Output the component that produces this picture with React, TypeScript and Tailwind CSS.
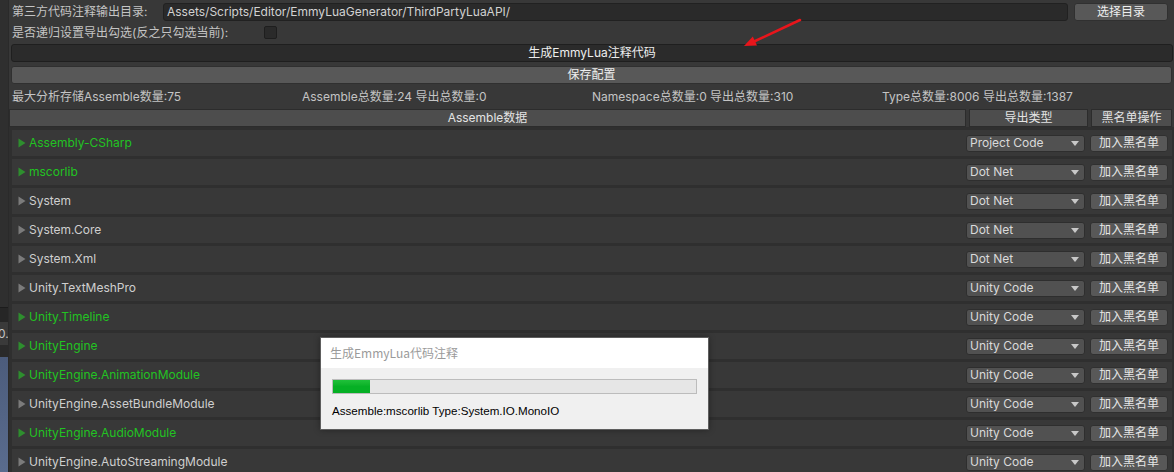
import React from "react";

type Row = { name: string; green: boolean; type: string };

const rows: Row[] = [
  { name: "Assembly-CSharp", green: true, type: "Project Code" },
  { name: "mscorlib", green: true, type: "Dot Net" },
  { name: "System", green: false, type: "Dot Net" },
  { name: "System.Core", green: false, type: "Dot Net" },
  { name: "System.Xml", green: false, type: "Dot Net" },
  { name: "Unity.TextMeshPro", green: false, type: "Unity Code" },
  { name: "Unity.Timeline", green: true, type: "Unity Code" },
  { name: "UnityEngine", green: true, type: "Unity Code" },
  { name: "UnityEngine.AnimationModule", green: true, type: "Unity Code" },
  { name: "UnityEngine.AssetBundleModule", green: false, type: "Unity Code" },
  { name: "UnityEngine.AudioModule", green: true, type: "Unity Code" },
  { name: "UnityEngine.AutoStreamingModule", green: false, type: "Unity Code" },
];

function Tri({ green }: { green: boolean }) {
  return (
    <svg width="8" height="10" viewBox="0 0 8 10" className="shrink-0">
      <polygon points="0.5,0.5 7.5,5 0.5,9.5" fill={green ? "#2e8e2e" : "#7b7b7b"} />
    </svg>
  );
}

function ListRow({ r }: { r: Row }) {
  return (
    <div className="mt-[3px] h-[26px] bg-[#383838] flex items-center pl-[6px] pr-[4px]">
      <Tri green={r.green} />
      <span
        className={
          "ml-[3px] flex-1 text-[12px] leading-none whitespace-nowrap " +
          (r.green ? "text-[#22c322]" : "text-[#cfcfcf]")
        }
      >
        {r.name}
      </span>
      <div className="w-[119px] h-[17px] rounded-[3px] bg-[#515151] border border-[#2e2e2e] flex items-center pl-[3px] pr-[5px] text-[12px] text-[#dadada] leading-none">
        <span className="flex-1 whitespace-nowrap">{r.type}</span>
        <svg width="8" height="5" viewBox="0 0 8 5">
          <polygon points="0,0 8,0 4,5" fill="#c8c8c8" />
        </svg>
      </div>
      <div className="ml-[5px] w-[78px] h-[17px] rounded-[3px] bg-[#585858] border border-[#303030] flex items-center justify-center text-[12px] text-[#e6e6e6] leading-none">
        加入黑名单
      </div>
    </div>
  );
}

export default function App() {
  return (
    <div className="relative w-[1174px] h-[472px] overflow-hidden bg-[#383838] flex font-['Inter','Noto_Sans_CJK_SC',sans-serif]">
      {/* left strip (window behind) */}
      <div className="w-[9px] shrink-0 flex flex-col border-r border-[#2a2a2a]">
        <div className="h-[307px] bg-[#2f2f2f]" />
        <div className="h-[1px] bg-[#1c1c1c]" />
        <div className="h-[14px] bg-[#262626]" />
        <div className="h-[23px] bg-[#3a3a3a] overflow-hidden flex items-center">
          <span className="text-[12px] text-[#c4c4c4] leading-none -ml-[2px] font-['Inter',sans-serif]">0.4</span>
        </div>
        <div className="h-[12px] bg-[#2a2a2a]" />
        <div className="flex-1 bg-gradient-to-b from-[#4c5c7c] to-[#5a6c8e]" />
      </div>

      {/* main */}
      <div className="flex-1 flex flex-col">
        <div className="px-[2px] pt-[3px] flex flex-col">
          {/* row 1 */}
          <div className="h-[18px] flex items-center">
            <span className="pl-[1px] w-[152px] text-[12px] text-[#c4c4c4] leading-none whitespace-nowrap">
              第三方代码注释输出目录:
            </span>
            <div className="flex-1 h-[18px] bg-[#2a2a2a] border border-[#212121] rounded-[3px] flex items-center pl-[3px] text-[12px] text-[#d2d2d2] leading-none whitespace-nowrap">
              Assets/Scripts/Editor/EmmyLuaGenerator/ThirdPartyLuaAPI/
            </div>
            <div className="ml-[6px] w-[94px] h-[18px] bg-[#585858] border border-[#303030] rounded-[3px] flex items-center justify-center text-[12px] text-[#eeeeee] leading-none">
              选择目录
            </div>
            <div className="w-[4px]" />
          </div>
          {/* row 2 */}
          <div className="h-[23px] flex items-center">
            <span className="pl-[1px] w-[253px] text-[12px] text-[#c4c4c4] leading-none whitespace-nowrap">
              是否递归设置导出勾选(反之只勾选当前):
            </span>
            <div className="w-[13px] h-[13px] bg-[#2a2a2a] border border-[#1e1e1e] rounded-[2px]" />
          </div>
          {/* generate button */}
          <div className="h-[18px] bg-[#2b2b2b] border border-[#1f1f1f] rounded-[3px] flex items-center justify-center text-[12px] text-[#eeeeee] leading-none mr-[-1px]">
            生成EmmyLua注释代码
          </div>
          {/* save button */}
          <div className="mt-[4px] h-[18px] bg-[#585858] border border-[#303030] rounded-[3px] flex items-center justify-center text-[12px] text-[#eeeeee] leading-none">
            保存配置
          </div>
          {/* stats */}
          <div className="h-[25px] grid grid-cols-4 items-center pl-[1px] text-[12px] text-[#c4c4c4] leading-none whitespace-nowrap">
            <span>最大分析存储Assemble数量:75</span>
            <span>Assemble总数量:24 导出总数量:0</span>
            <span>Namespace总数量:0 导出总数量:310</span>
            <span>Type总数量:8006 导出总数量:1387</span>
          </div>
        </div>

        {/* header */}
        <div className="h-[18px] flex pr-[2px] text-[12px] text-[#e4e4e4] leading-none">
          <div className="flex-1 bg-[#4d4d4d] border border-[#2c2c2c] flex items-center justify-center">Assemble数据</div>
          <div className="ml-[3px] w-[119px] bg-[#4d4d4d] border border-[#2c2c2c] flex items-center justify-center">导出类型</div>
          <div className="ml-[3px] w-[81px] bg-[#4d4d4d] border border-[#2c2c2c] flex items-center justify-center">黑名单操作</div>
        </div>

        {/* list */}
        <div className="flex-1 bg-[#2f2f2f] pl-[3px] pr-[2px] overflow-hidden">
          {rows.map((r) => (
            <ListRow key={r.name} r={r} />
          ))}
        </div>
      </div>

      {/* red arrow annotation */}
      <svg className="absolute left-[740px] top-[15px]" width="70" height="40" viewBox="0 0 70 40">
        <line x1="60" y1="5" x2="13" y2="27" stroke="#e8151b" strokeWidth="2.5" strokeLinecap="round" />
        <polygon points="4,31 17,30.5 12.8,21.4" fill="#e8151b" />
      </svg>

      {/* progress dialog */}
      <div className="absolute left-[320px] top-[337px] w-[389px] h-[93px] border border-[#5e5e5e] bg-[#f0f0f0] flex flex-col shadow-[0_0_6px_rgba(0,0,0,0.35)]">
        <div className="h-[30px] bg-white flex items-center pl-[9px] text-[12px] text-[#9a9a9a] leading-none font-['Noto_Sans_CJK_SC','Liberation_Sans',sans-serif]">
          生成EmmyLua代码注释
        </div>
        <div className="px-[11px] pt-[11px] flex flex-col">
          <div className="h-[15px] border border-[#bcbcbc] bg-[#e6e6e6] flex">
            <div className="w-[37px] h-full bg-gradient-to-b from-[#1fc13a] via-[#06b025] to-[#06b025]" />
          </div>
          <div className="mt-[11px] text-[11.6px] text-black leading-none font-['Liberation_Sans',sans-serif] whitespace-nowrap">
            Assemble:mscorlib Type:System.IO.MonoIO
          </div>
        </div>
      </div>
    </div>
  );
}
